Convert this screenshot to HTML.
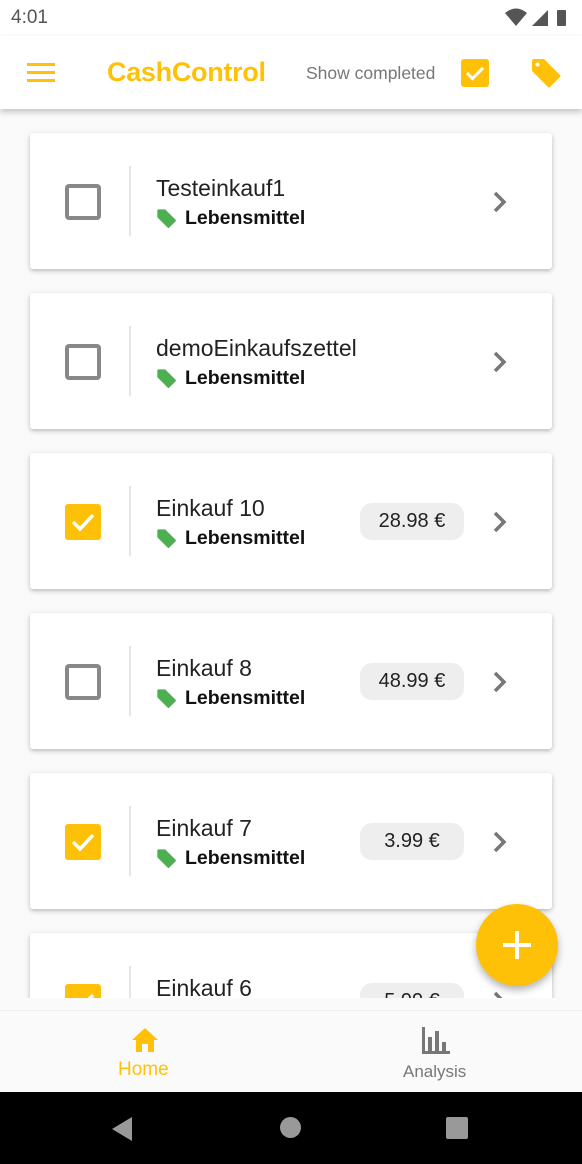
<!DOCTYPE html>
<html><head><meta charset="utf-8"><style>
*{margin:0;padding:0;box-sizing:border-box}
body{width:582px;height:1164px;overflow:hidden;background:#fafafa;font-family:"Liberation Sans",Roboto,sans-serif;position:relative}
.status{position:absolute;top:0;left:0;width:582px;height:36px;background:#fff}
.status .t{position:absolute;left:11px;top:7px;font-size:19px;color:#555}
.app{position:absolute;top:36px;left:0;width:582px;height:73px;background:#fff;box-shadow:0 3px 6px rgba(0,0,0,.22);z-index:3}
.title{position:absolute;left:107px;top:21px;font-size:27px;color:#ffc107;font-weight:bold;letter-spacing:-0.3px}
.sc{position:absolute;left:306px;top:27px;font-size:17.5px;color:#777}
.content{position:absolute;top:109px;left:0;width:582px;height:889px;overflow:hidden}
.card{position:absolute;left:30px;width:522px;height:136px;background:#fff;border-radius:3px;box-shadow:0 2px 4px rgba(0,0,0,.2),0 1px 8px rgba(0,0,0,.08)}
.cb{position:absolute;left:35px;top:51px;width:36px;height:36px;border:4px solid #888;border-radius:4px}
.cb.on{background:#ffc107;border:none;border-radius:3px}
.div{position:absolute;left:99px;top:33px;width:2px;height:70px;background:#e5e5e5}
.nm{position:absolute;left:126px;top:42px;font-size:23px;color:#222}
.tag{position:absolute;left:126px;top:74px;font-size:19.5px;font-weight:bold;color:#111;display:flex;align-items:center}
.tag svg{margin-right:8px}
.pill{position:absolute;left:330px;top:50px;width:104px;height:37px;background:#eee;border-radius:12px;font-size:20px;color:#222;text-align:center;line-height:37px}
.chev{position:absolute;left:462px;top:58px}
.fab{position:absolute;left:476px;top:904px;width:82px;height:82px;border-radius:50%;background:#ffc107;box-shadow:0 4px 8px rgba(0,0,0,.3);z-index:5}
.bnav{position:absolute;top:1010px;left:0;width:582px;height:82px;background:#fafafa;border-top:1px solid #eee}
.sys{position:absolute;top:1092px;left:0;width:582px;height:72px;background:#000}
</style></head><body>
<div class="status"><span class="t">4:01</span>
<svg style="position:absolute;left:504px;top:7px" width="72" height="22" viewBox="0 0 72 22"><path d="M1 6 Q12 -3 23 6 L12 19Z" fill="#555"/><path d="M28 19 L44 3 L44 19Z" fill="#555"/><rect x="53" y="3" width="9" height="16" rx="1" fill="#555"/></svg></div>
<div class="app">
<svg style="position:absolute;left:27px;top:27px" width="28" height="19"><rect y="0" width="28" height="3" fill="#ffc107"/><rect y="8" width="28" height="3" fill="#ffc107"/><rect y="16" width="28" height="3" fill="#ffc107"/></svg>
<div class="title">CashControl</div>
<div class="sc">Show completed</div>
<svg style="position:absolute;left:461px;top:23px" width="28" height="28" viewBox="0 0 28 28"><rect width="28" height="28" rx="3" fill="#ffc107"/><path d="M6 14 L11.5 19.5 L22 9" stroke="#fff" stroke-width="3" fill="none"/></svg>
<svg style="position:absolute;left:530px;top:21px" width="32" height="32" viewBox="0 0 32 32"><path d="M2 4 Q2 2 4 2 L14 2 L30 18 Q31 19 30 20 L20 30 Q19 31 18 30 L2 14Z" fill="#ffc107"/><circle cx="7.5" cy="7.5" r="2" fill="#fff"/></svg>
</div>
<div class="content">
<div class="card" style="top:24px"><div class="cb"></div><div class="div"></div><div class="nm">Testeinkauf1</div><div class="tag"><svg width="21" height="21" viewBox="0 0 32 32"><path d="M2 4 Q2 2 4 2 L14 2 L30 18 Q31 19 30 20 L20 30 Q19 31 18 30 L2 14Z" fill="#4caf50"/></svg>Lebensmittel</div><svg class="chev" width="16" height="22"><path d="M3 2 L12 11 L3 20" stroke="#777" stroke-width="3.5" fill="none"/></svg></div>
<div class="card" style="top:184px"><div class="cb"></div><div class="div"></div><div class="nm">demoEinkaufszettel</div><div class="tag"><svg width="21" height="21" viewBox="0 0 32 32"><path d="M2 4 Q2 2 4 2 L14 2 L30 18 Q31 19 30 20 L20 30 Q19 31 18 30 L2 14Z" fill="#4caf50"/></svg>Lebensmittel</div><svg class="chev" width="16" height="22"><path d="M3 2 L12 11 L3 20" stroke="#777" stroke-width="3.5" fill="none"/></svg></div>
<div class="card" style="top:344px"><div class="cb on"><svg width="36" height="36"><path d="M8 18 L15 25 L28 11" stroke="#fff" stroke-width="3.5" fill="none"/></svg></div><div class="div"></div><div class="nm">Einkauf 10</div><div class="tag"><svg width="21" height="21" viewBox="0 0 32 32"><path d="M2 4 Q2 2 4 2 L14 2 L30 18 Q31 19 30 20 L20 30 Q19 31 18 30 L2 14Z" fill="#4caf50"/></svg>Lebensmittel</div><div class="pill">28.98 €</div><svg class="chev" width="16" height="22"><path d="M3 2 L12 11 L3 20" stroke="#777" stroke-width="3.5" fill="none"/></svg></div>
<div class="card" style="top:504px"><div class="cb"></div><div class="div"></div><div class="nm">Einkauf 8</div><div class="tag"><svg width="21" height="21" viewBox="0 0 32 32"><path d="M2 4 Q2 2 4 2 L14 2 L30 18 Q31 19 30 20 L20 30 Q19 31 18 30 L2 14Z" fill="#4caf50"/></svg>Lebensmittel</div><div class="pill">48.99 €</div><svg class="chev" width="16" height="22"><path d="M3 2 L12 11 L3 20" stroke="#777" stroke-width="3.5" fill="none"/></svg></div>
<div class="card" style="top:664px"><div class="cb on"><svg width="36" height="36"><path d="M8 18 L15 25 L28 11" stroke="#fff" stroke-width="3.5" fill="none"/></svg></div><div class="div"></div><div class="nm">Einkauf 7</div><div class="tag"><svg width="21" height="21" viewBox="0 0 32 32"><path d="M2 4 Q2 2 4 2 L14 2 L30 18 Q31 19 30 20 L20 30 Q19 31 18 30 L2 14Z" fill="#4caf50"/></svg>Lebensmittel</div><div class="pill">3.99 €</div><svg class="chev" width="16" height="22"><path d="M3 2 L12 11 L3 20" stroke="#777" stroke-width="3.5" fill="none"/></svg></div>
<div class="card" style="top:824px"><div class="cb on"><svg width="36" height="36"><path d="M8 18 L15 25 L28 11" stroke="#fff" stroke-width="3.5" fill="none"/></svg></div><div class="div"></div><div class="nm">Einkauf 6</div><div class="tag"><svg width="21" height="21" viewBox="0 0 32 32"><path d="M2 4 Q2 2 4 2 L14 2 L30 18 Q31 19 30 20 L20 30 Q19 31 18 30 L2 14Z" fill="#4caf50"/></svg>Lebensmittel</div><div class="pill">5.99 €</div><svg class="chev" width="16" height="22"><path d="M3 2 L12 11 L3 20" stroke="#777" stroke-width="3.5" fill="none"/></svg></div>
</div>
<div class="fab"><svg width="82" height="82"><path d="M41 27 V55 M27 41 H55" stroke="#fff" stroke-width="4"/></svg></div>
<div class="bnav">
<svg style="position:absolute;left:131px;top:16px" width="28" height="26" viewBox="0 0 28 26"><path d="M14 1 L27 13 L23 13 L23 25 L17 25 L17 17 L11 17 L11 25 L5 25 L5 13 L1 13Z" fill="#ffc107"/></svg>
<div style="position:absolute;left:118px;top:48px;font-size:19px;color:#ffc107">Home</div>
<svg style="position:absolute;left:422px;top:16px" width="28" height="28" viewBox="0 0 28 28"><rect x="0" y="0" width="3" height="27" fill="#777"/><rect x="0" y="24" width="28" height="3" fill="#777"/><rect x="6" y="10" width="4" height="15" fill="#777"/><rect x="13" y="4" width="4" height="21" fill="#777"/><rect x="20" y="15" width="4" height="10" fill="#777"/></svg>
<div style="position:absolute;left:403px;top:51px;font-size:17px;color:#777">Analysis</div>
</div>
<div class="sys">
<svg style="position:absolute;left:110px;top:24px" width="24" height="26"><path d="M22 1 L22 25 L2 13Z" fill="#999"/></svg>
<div style="position:absolute;left:280px;top:25px;width:21px;height:21px;border-radius:50%;background:#999"></div>
<div style="position:absolute;left:446px;top:25px;width:22px;height:22px;border-radius:2px;background:#999"></div>
</div>
</body></html>
